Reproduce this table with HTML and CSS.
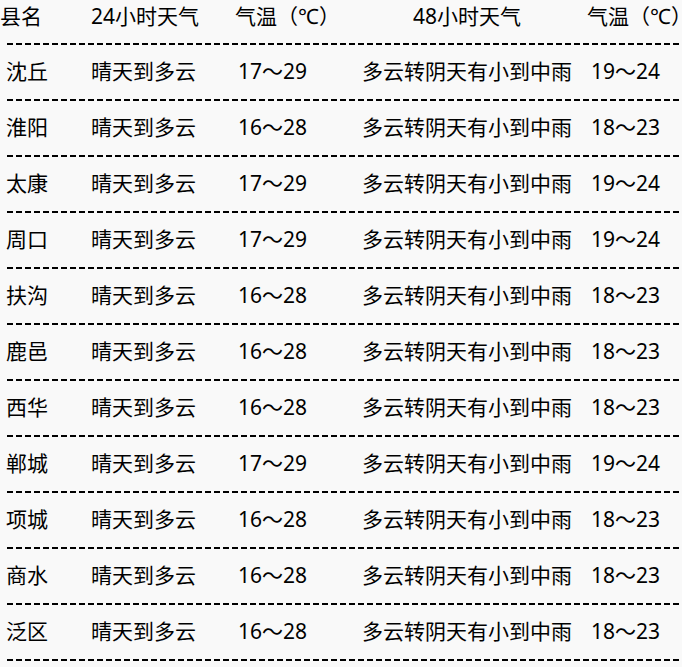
FILE: index.html
```html
<!DOCTYPE html>
<html lang="zh-CN">
<head>
<meta charset="utf-8">
<title>天气预报</title>
<link rel="stylesheet" href="styles.css">
</head>
<body>
<div class="table">
  <div class="row head">
    <div class="c1">县名</div>
    <div class="c2">24小时天气</div>
    <div class="c3">气温（℃）</div>
    <div class="c4">48小时天气</div>
    <div class="c5">气温（℃）</div>
  </div>
  <div class="row"><div class="c1">沈丘</div><div class="c2">晴天到多云</div><div class="c3">17～29</div><div class="c4">多云转阴天有小到中雨</div><div class="c5">19～24</div></div>
  <div class="row"><div class="c1">淮阳</div><div class="c2">晴天到多云</div><div class="c3">16～28</div><div class="c4">多云转阴天有小到中雨</div><div class="c5">18～23</div></div>
  <div class="row"><div class="c1">太康</div><div class="c2">晴天到多云</div><div class="c3">17～29</div><div class="c4">多云转阴天有小到中雨</div><div class="c5">19～24</div></div>
  <div class="row"><div class="c1">周口</div><div class="c2">晴天到多云</div><div class="c3">17～29</div><div class="c4">多云转阴天有小到中雨</div><div class="c5">19～24</div></div>
  <div class="row"><div class="c1">扶沟</div><div class="c2">晴天到多云</div><div class="c3">16～28</div><div class="c4">多云转阴天有小到中雨</div><div class="c5">18～23</div></div>
  <div class="row"><div class="c1">鹿邑</div><div class="c2">晴天到多云</div><div class="c3">16～28</div><div class="c4">多云转阴天有小到中雨</div><div class="c5">18～23</div></div>
  <div class="row"><div class="c1">西华</div><div class="c2">晴天到多云</div><div class="c3">16～28</div><div class="c4">多云转阴天有小到中雨</div><div class="c5">18～23</div></div>
  <div class="row"><div class="c1">郸城</div><div class="c2">晴天到多云</div><div class="c3">17～29</div><div class="c4">多云转阴天有小到中雨</div><div class="c5">19～24</div></div>
  <div class="row"><div class="c1">项城</div><div class="c2">晴天到多云</div><div class="c3">16～28</div><div class="c4">多云转阴天有小到中雨</div><div class="c5">18～23</div></div>
  <div class="row"><div class="c1">商水</div><div class="c2">晴天到多云</div><div class="c3">16～28</div><div class="c4">多云转阴天有小到中雨</div><div class="c5">18～23</div></div>
  <div class="row"><div class="c1">泛区</div><div class="c2">晴天到多云</div><div class="c3">16～28</div><div class="c4">多云转阴天有小到中雨</div><div class="c5">18～23</div></div>
</div>
</body>
</html>
```
FILE: styles.css
```css
html, body {
  margin: 0;
  padding: 0;
  background: #f9f9f9;
}
body {
  font-family: "Noto Sans", "Noto Sans CJK SC", sans-serif;
  font-size: 21px;
  color: #000;
  overflow: hidden;
}
.table {
  display: flex;
  flex-direction: column;
}
.row {
  display: grid;
  grid-template-columns: 91px 144px 127px 225px 1fr;
  line-height: 30px;
  height: 30px;
  padding: 11px 0 15px;
  white-space: nowrap;
  background-image: repeating-linear-gradient(to right, #000 0 6px, transparent 6px 9px);
  background-repeat: no-repeat;
  background-size: calc(100% - 7px) 2px;
  background-position: 7px 100%;
}
.row.head {
  padding: 1px 0 14px;
}
.row .c1 { padding-left: 6px; }
.row .c3 { padding-left: 3px; }
.row .c5 { padding-left: 4px; }
.row.head .c1 { padding-left: 0; }
.row.head .c3 { padding-left: 0; }
.row.head .c4 { padding-left: 51px; }
.row.head .c5 { padding-left: 0; }
```
